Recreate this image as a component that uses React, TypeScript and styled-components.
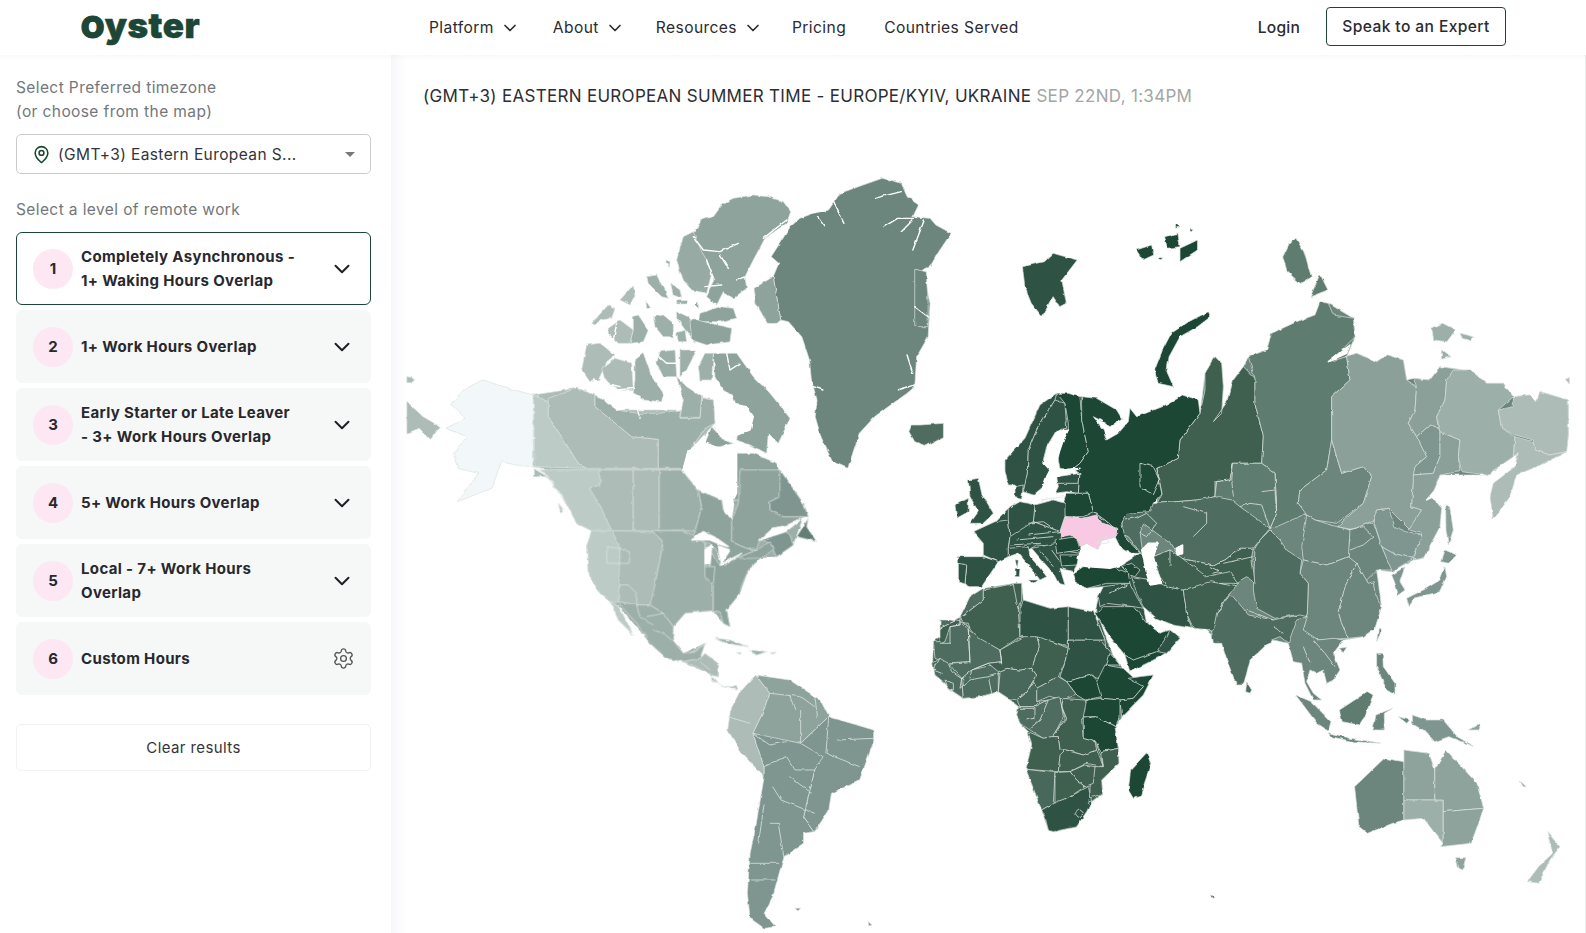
import React from 'react';
import styled, { createGlobalStyle } from 'styled-components';
import { ChevronDown, MapPin, Settings } from 'lucide-react';

const GlobalStyle = createGlobalStyle`
  html, body {
    margin: 0;
    height: 100%;
    background: #ffffff;
    overflow: hidden;
  }
  * {
    box-sizing: border-box;
  }
`;

const FONT = `'Inter', 'Open Sans', sans-serif`;

const Page = styled.div`
  display: flex;
  flex-direction: column;
  width: 1586px;
  height: 933px;
  font-family: ${FONT};
  color: #28282d;
`;

const TopBar = styled.header`
  position: relative;
  z-index: 2;
  display: flex;
  align-items: center;
  flex: 0 0 55px;
  padding: 0 80px 0 81px;
  background: #ffffff;
  box-shadow: 0 1px 5px rgba(20, 30, 40, 0.05);
`;

const Logo = styled.div`
  width: 348px;
  margin-top: -6px;
  font-size: 35px;
  font-weight: 900;
  letter-spacing: 0.5px;
  color: #1c4635;
  -webkit-text-stroke: 0.5px #1c4635;
`;

const LogoCap = styled.span`
  font-size: 30px;
  -webkit-text-stroke: 1.2px #1c4635;
`;

const Nav = styled.nav`
  display: flex;
  align-items: center;
  flex: 1;
`;

const NavLink = styled.a<{ $gap: number }>`
  display: flex;
  align-items: center;
  gap: 6px;
  margin-right: ${(p) => p.$gap}px;
  font-size: 15.6px;
  letter-spacing: 0.4px;
  color: #2b2b30;
`;

const Login = styled.a`
  margin-right: 26px;
  font-size: 15.6px;
  font-weight: 500;
  letter-spacing: 0.2px;
  color: #2b2b30;
`;

const ExpertButton = styled.button`
  width: 180px;
  height: 39px;
  margin-top: -2px;
  padding: 0;
  font-family: ${FONT};
  font-size: 15.6px;
  font-weight: 500;
  letter-spacing: 0.4px;
  color: #2b2b30;
  background: #ffffff;
  border: 1px solid #1c4635;
  border-radius: 4px;
`;

const Body = styled.div`
  display: grid;
  grid-template-columns: 391px 1fr;
  flex: 1;
  min-height: 0;
`;

const Sidebar = styled.aside`
  display: flex;
  flex-direction: column;
  padding: 21px 20px 0 16px;
  background: #ffffff;
`;

const Label = styled.div`
  font-size: 15.5px;
  line-height: 24px;
  letter-spacing: 0.4px;
  color: #73777c;
`;

const Select = styled.div`
  display: flex;
  align-items: center;
  height: 40px;
  margin: 10px 0 24px;
  padding: 0 16px 0 15px;
  gap: 7px;
  font-size: 15.5px;
  letter-spacing: 0.4px;
  color: #34343a;
  background: #ffffff;
  border: 1px solid #c9cccd;
  border-radius: 5px;

  svg {
    color: #1c4635;
  }
`;

const SelectValue = styled.span`
  flex: 1;
`;

const Caret = styled.span`
  width: 0;
  height: 0;
  margin-right: -1px;
  border-left: 5px solid transparent;
  border-right: 5px solid transparent;
  border-top: 5px solid #77797c;
`;

const CardList = styled.div`
  display: flex;
  flex-direction: column;
  gap: 5px;
  margin-top: 10px;
`;

const Card = styled.div<{ $active?: boolean }>`
  display: flex;
  align-items: center;
  height: 73px;
  padding: 0 15px 0 16px;
  background: ${(p) => (p.$active ? '#ffffff' : '#f6f7f7')};
  border: 1px solid ${(p) => (p.$active ? '#1c4635' : '#f6f7f7')};
  border-radius: 6px;
`;

const Badge = styled.div`
  display: flex;
  align-items: center;
  justify-content: center;
  flex: 0 0 40px;
  height: 40px;
  margin-right: 8px;
  font-size: 15px;
  font-weight: 700;
  color: #28282d;
  background: #fce7f3;
  border-radius: 50%;
`;

const CardTitle = styled.div`
  flex: 1;
  font-size: 15px;
  font-weight: 700;
  line-height: 24px;
  letter-spacing: 0.35px;
  color: #28282d;
`;

const ClearButton = styled.button`
  width: 100%;
  height: 47px;
  margin-top: 29px;
  font-family: ${FONT};
  font-size: 15px;
  letter-spacing: 0.4px;
  color: #34343a;
  background: #ffffff;
  border: 1px solid #f1f2f3;
  border-radius: 5px;
`;

const Main = styled.main`
  overflow: hidden;
  border-right: 1px solid #ebecec;
  background: linear-gradient(90deg, #f5f6f9 0, #fcfcfd 8px, #ffffff 16px);
`;

const ZoneTitle = styled.div`
  height: 53px;
  padding: 29px 0 0 32px;
  font-size: 17px;
  line-height: 24px;
  letter-spacing: 0.3px;
  text-transform: uppercase;
  color: #2d2d33;
  white-space: nowrap;
`;

const ZoneTime = styled.span`
  color: #a5a5a5;
`;

const MapSvg = styled.svg`
  display: block;
  margin-top: 12px;
  width: 1195px;
  height: 813px;
`;

const Land = styled.path`
  stroke: #dbe3e0;
  stroke-width: 0.7;
  vector-effect: non-scaling-stroke;
  stroke-linejoin: round;
`;

const Line = styled.path`
  fill: none;
  stroke: #dbe3e0;
  stroke-width: 0.8;
  vector-effect: non-scaling-stroke;
`;

const Sea = styled.path`
  fill: #ffffff;
  stroke: #ffffff;
  stroke-width: 1.4;
  vector-effect: non-scaling-stroke;
  stroke-linejoin: round;
  stroke-linecap: round;
`;

const Fjord = styled(Sea)`
  fill: none;
`;

type Shape = [string, string];

const C = {
  alaska: '#f2f7f9',
  pale: '#bdcbc7',
  light: '#adbcb7',
  mid: '#9dafa9',
  soft: '#8ea39c',
  slate: '#7f9690',
  sage: '#6c857d',
  moss: '#5f7b6f',
  fern: '#4f6c61',
  pine: '#3f6050',
  forest: '#2f5345',
  dark: '#1c4635',
  pink: '#f9c8e3',
};

type RegionData = {
  at: string;
  land: Shape[];
  lines?: string[];
  seas?: string[];
  fjords?: string[];
};

const ARCTIC_AT = 'translate(520 180) scale(0.3333)';
const NORTH_AMERICA_AT = 'translate(540 470) scale(0.3333)';
const AFRICA_AT = 'translate(920 620) scale(0.3333)';
const ASIA_AT = 'translate(1200 300) scale(0.3333)';
const EUROPE_AT = 'translate(940 380) scale(0.3333)';

// solid continent shapes, drawn first so the bands below sit on land
const underlays: RegionData[] = [
  {
    at: ARCTIC_AT,
    land: [[C.light, 'M40,645 170,625 225,645 290,690 480,690 540,650 580,660 585,730 510,810 490,865 490,890 40,890Z']],
  },
  {
    at: NORTH_AMERICA_AT,
    land: [[C.mid, 'M0,0 425,0 475,60 545,90 550,120 575,150 600,0 720,0 790,100 805,140 790,140 760,225 710,260 660,265 625,300 600,370 560,420 570,470 550,460 520,422 435,430 400,470 398,510 430,550 495,520 480,565 535,580 535,620 515,615 430,575 380,565 330,520 235,405 210,395 180,370 145,310 140,230 155,182 110,160 75,90 25,20Z']],
  },
  {
    at: AFRICA_AT,
    land: [[C.pine, 'M40,65 120,0 540,0 575,100 625,175 700,165 670,225 605,290 585,320 595,385 597,430 545,480 548,520 515,545 470,620 400,635 385,630 365,570 340,505 318,448 335,375 325,335 300,310 290,285 295,260 265,235 235,215 180,230 130,235 100,215 70,185 45,165 38,130Z']],
  },
  {
    at: ASIA_AT,
    land: [[C.sage, 'M0,340 15,220 45,170 65,190 70,260 65,340 40,365 85,300 100,240 130,200 145,170 200,150 215,100 345,45 385,10 460,55 465,110 440,170 470,160 530,185 560,165 610,180 620,240 640,235 690,240 720,200 790,210 810,210 860,250 910,250 940,290 990,285 1010,305 1020,275 1105,300 1105,405 1100,455 1010,500 945,500 955,458 940,470 860,525 720,525 695,590 725,625 670,775 640,780 600,800 575,815 530,810 545,920 490,1010 430,1020 400,1015 355,1020 310,990 265,1030 215,1020 150,1080 110,1155 65,1030 0,970 -60,970 -40,880 -170,770 -240,700 -234,670 -129,610 -129,505 -66,475Z']],
  },
  {
    at: EUROPE_AT,
    land: [
      [C.pine, 'M60,715 90,650 130,625 225,610 245,610 250,660 330,685 385,680 460,695 495,780 500,830 0,830 0,745Z'],
      [C.forest, 'M100,455 165,425 205,385 240,365 285,375 340,360 370,370 380,340 415,340 445,340 460,395 495,420 530,450 530,470 490,480 470,510 440,490 420,500 420,525 410,555 400,575 360,565 340,580 275,505 205,505 175,545 130,525 130,490Z'],
      [C.forest, 'M195,240 255,175 300,75 350,40 425,50 445,215 420,250 395,270 360,265 355,240 360,185 385,150 350,150 320,200 310,240 330,270 310,320 280,345 250,335 240,340 225,315 205,315 195,270Z'],
      [C.forest, 'M400,580 430,560 545,555 600,520 640,530 690,510 800,590 895,610 860,650 830,700 820,750 755,745 700,735 650,715 610,680 620,730 660,760 690,750 720,775 680,820 570,875 555,825 510,770 465,700 475,650 490,620 440,625 410,610Z'],
    ],
  },
];

const farNorth: RegionData = {
  at: 'translate(400 160) scale(0.3827 0.3333)',
  land: [
    [C.alaska, 'M348,705 300,690 215,660 165,690 135,735 170,775 120,805 175,830 140,880 150,925 205,940 150,1025 240,985 265,905 300,915 348,920 375,925 415,985 440,1040 415,1000 385,950 348,925Z'],
    [C.light, 'M18,725 60,770 105,800 80,838 50,805 18,820Z'],
    [C.light, 'M18,650 30,652 38,660 30,668 18,668Z'],
    [C.sage, 'M970,290 1020,200 1045,175 1080,160 1120,150 1150,100 1210,75 1260,55 1310,70 1325,110 1355,135 1340,170 1385,175 1400,195 1440,220 1405,280 1385,320 1365,330 1375,380 1385,430 1380,530 1350,590 1345,680 1325,700 1270,745 1240,770 1200,820 1170,925 1130,905 1100,830 1085,770 1090,720 1075,660 1070,600 1050,530 1015,485 995,480 975,350 990,310Z'],
    [C.soft, 'M975,350 995,480 985,490 960,490 930,430 925,385Z'],
    [C.sage, 'M1345,328 1375,335 1380,430 1380,500 1345,500Z'],
    [C.fern, 'M1335,795 1360,795 1420,790 1420,830 1375,858 1345,845 1330,815Z'],
  ],
  fjords: [
    'M1240,115 1310,95',
    'M1265,200 1300,175 1350,175',
    'M1310,215 1340,180',
    'M1340,270 1370,180',
    'M1130,120 1160,190',
    'M1090,170 1110,200',
    'M1300,690 1345,675',
    'M1325,585 1340,640',
    'M1080,680 1105,690',
    'M1345,440 1380,470',
  ],
};

const arctic: RegionData = {
  at: ARCTIC_AT,
  land: [
    [C.soft, 'M610,70 640,55 700,45 745,50 790,65 812,95 800,130 770,150 735,175 700,240 675,290 680,325 640,355 610,335 590,375 560,350 585,300 565,260 540,230 520,160 545,120 580,110Z'],
    ['#97aaa4', 'M490,170 520,155 545,215 560,240 575,280 560,340 515,330 490,300 470,240Z'],
    ['#97aaa4', 'M435,240 450,245 448,262Z'],
    [C.soft, 'M540,400 600,380 640,385 650,415 600,425 535,425Z'],
    [C.light, 'M215,430 265,375 285,385 275,415 240,420 225,435Z'],
    [C.light, 'M300,360 340,315 345,345 330,375Z'],
    [C.light, 'M265,445 300,420 340,450 330,490 295,490 265,460Z'],
    [C.mid, 'M340,410 355,405 385,450 370,485 330,490 340,450Z'],
    [C.mid, 'M380,290 410,285 445,355 425,350 385,310Z'],
    [C.mid, 'M452,310 480,330 485,355 460,345Z'],
    [C.mid, 'M400,410 430,405 460,430 460,470 430,470 405,440Z'],
    [C.mid, 'M470,395 505,410 530,440 525,490 500,455 470,415Z'],
    [C.mid, 'M470,460 495,450 500,485 475,485Z'],
    [C.soft, 'M510,420 530,420 635,445 630,485 560,495 515,480Z'],
    [C.soft, 'M525,375 535,365 535,385Z'],
    [C.mid, 'M470,362 500,362 500,372 470,372Z'],
    [C.mid, 'M378,362 392,385 380,385Z'],
    [C.light, 'M200,495 240,490 285,525 260,545 235,600 210,605 185,570Z'],
    [C.light, 'M245,565 285,535 335,550 340,632 300,630 255,600Z'],
    [C.mid, 'M345,540 370,520 395,590 430,640 425,665 370,660 340,640 345,600Z'],
    [C.mid, 'M420,515 465,510 470,590 430,590 410,550Z'],
    [C.mid, 'M480,510 530,510 500,570 480,590Z'],
    [C.soft, 'M580,520 650,520 700,590 750,640 810,715 775,790 745,760 740,820 700,800 650,780 660,720 640,650 600,620 585,590Z'],
    [C.mid, 'M535,560 555,520 580,520 575,600 540,600Z'],
    [C.pale, 'M40,645 85,665 85,712 125,770 175,850 200,865 45,860Z'],
    [C.light, 'M85,655 170,625 225,645 225,680 335,770 415,778 415,865 200,865 175,850 125,770 85,710Z'],
    [C.mid, 'M225,645 290,690 350,700 420,700 480,690 480,715 540,715 545,655 580,660 585,730 555,745 510,810 490,865 415,865 415,778 335,770 225,680Z'],
    [C.mid, 'M470,590 500,620 545,650 540,712 480,712 490,660Z'],
    [C.soft, 'M555,790 575,740 610,780 640,790 600,800 565,800Z'],
    [C.soft, 'M650,820 700,820 770,850 780,880 800,905 830,960 640,960Z'],
  ],
  seas: [
    'M490,865 505,810 560,790 610,810 650,820 650,880 650,940 640,960 555,940 510,910Z',
    'M620,670 680,680 700,710 690,750 640,770 600,760 610,700Z',
  ],
  fjords: [
    'M520,170 550,210 600,215 655,190',
    'M600,225 625,265',
    'M560,240 580,295',
    'M555,320 605,315',
    'M730,175 800,120',
    'M650,300 680,290',
    'M620,520 630,570 660,550',
    'M290,630 345,625',
    'M220,600 300,620',
    'M290,690 360,670 440,690',
    'M350,680 360,715',
    'M405,520 440,550 470,550',
    'M280,480 290,430',
  ],
};

const northAmerica: RegionData = {
  at: NORTH_AMERICA_AT,
  land: [
    [C.pale, 'M0,0 180,0 180,45 148,55 180,105 215,182 155,182 110,160 75,90 25,20Z'],
    [C.pale, 'M55,100 72,120 62,130Z'],
    [C.light, 'M180,0 280,0 280,182 215,182 180,105 148,55 180,45Z'],
    [C.light, 'M280,0 358,0 358,182 280,182Z'],
    [C.mid, 'M358,0 425,0 475,60 485,110 465,185 425,180 358,182Z'],
    [C.soft, 'M475,60 545,90 550,120 575,150 575,215 620,235 650,240 590,265 545,285 540,255 510,220 460,210 465,185 485,110Z'],
    [C.soft, 'M575,150 595,100 600,0 720,0 750,50 720,80 690,95 690,120 730,140 790,140 725,175 660,210 650,235 620,235 575,215Z'],
    [C.slate, 'M720,0 790,100 805,140 730,140 690,120 690,95 720,80Z'],
    ['#647f75', 'M805,145 800,170 830,215 790,205 770,200Z'],
    [C.slate, 'M660,210 725,175 750,195 760,225 710,260 700,240 690,215Z'],
    [C.pale, 'M155,182 215,182 240,230 240,395 210,395 180,370 145,310 140,230Z'],
    [C.light, 'M215,182 335,185 370,215 345,345 350,345 345,405 290,405 235,395 240,230Z'],
    [C.mid, 'M335,182 425,182 460,195 495,220 495,290 520,340 520,422 480,425 435,430 400,470 370,430 330,405 345,345 370,215Z'],
    [C.soft, 'M495,290 495,220 540,285 590,265 660,240 660,265 625,300 605,345 600,370 560,420 570,470 550,460 540,425 520,422 520,340 495,320Z'],
    [C.soft, 'M590,265 650,240 690,215 700,240 660,265Z'],
    [C.pale, 'M210,395 235,405 280,495 235,450Z'],
    [C.mid, 'M235,395 290,405 330,405 370,430 400,470 398,510 430,550 460,545 495,520 480,565 430,575 380,565 330,520 290,460 245,410Z'],
    [C.light, 'M430,575 480,565 495,550 535,580 535,620 515,615 470,590Z'],
    [C.light, 'M515,620 545,650 590,650 595,660 550,650 515,630Z'],
    [C.mid, 'M525,505 570,510 625,530 590,525 545,515Z'],
    [C.mid, 'M625,540 680,545 650,555Z'],
    [C.mid, 'M590,548 605,548 600,552Z'],
    [C.mid, 'M690,548 708,548 700,552Z'],
  ],
  lines: [
    'M200,230 235,235 268,245 268,280 200,280Z',
    'M235,345 265,345 290,370 290,405',
    'M290,405 300,440 340,465',
    'M320,440 370,430',
    'M340,480 370,490 395,510',
    'M495,290 525,290 520,340',
    'M450,550 500,520',
    'M480,575 510,600',
  ],
  seas: [
    'M455,210 490,185 530,205 565,230 545,225 510,210Z',
    'M495,240 515,225 510,285 495,280Z',
    'M535,228 570,240 545,280 540,260Z',
    'M540,285 605,250 580,265 550,285Z',
    'M660,210 700,175 745,165 780,150 735,185Z',
  ],
};

const southAndOceania: RegionData = {
  at: 'translate(680 560) scale(0.5612 0.3333)',
  land: [
    [C.light, 'M135,345 160,400 150,450 130,520 150,620 150,650 110,580 85,510 90,450 105,400Z'],
    [C.soft, 'M135,345 195,360 250,420 265,470 215,550 180,540 150,530 130,520 150,450 160,400Z'],
    [C.slate, 'M265,470 345,510 345,545 320,660 270,700 265,750 240,815 220,770 240,630 250,590 215,550Z'],
    [C.slate, 'M130,520 215,550 255,590 240,630 220,770 240,815 220,820 220,850 185,890 175,950 165,1010 150,1060 170,1100 150,1105 125,1075 120,1000 125,880 135,800 150,650 150,620Z'],
    [C.sage, 'M1255,595 1290,605 1290,780 1270,790 1225,820 1210,800 1202,680Z'],
    [C.soft, 'M1290,605 1290,570 1335,580 1345,630 1345,720 1290,720Z'],
    [C.mid, 'M1290,720 1360,720 1360,850 1345,820 1325,775 1290,780Z'],
    [C.soft, 'M1345,630 1365,570 1420,670 1432,745 1360,755 1360,720 1345,720Z'],
    [C.soft, 'M1360,755 1432,745 1410,850 1355,860 1360,850Z'],
    [C.soft, 'M1382,893 1400,893 1395,930 1388,925Z'],
    [C.light, 'M1545,815 1568,860 1550,900 1530,970 1510,965 1530,920 1555,880Z'],
    [C.slate, 'M1305,465 1330,480 1360,480 1385,530 1415,560 1370,530 1345,545 1325,510 1305,490Z'],
    [C.sage, 'M1097,405 1125,425 1160,485 1155,512 1135,490Z'],
    [C.sage, 'M1155,518 1195,535 1250,550 1200,545 1160,530Z'],
    [C.moss, 'M1175,450 1225,395 1235,405 1220,470 1210,495 1180,485Z'],
    [C.sage, 'M1240,465 1270,445 1255,460 1255,510 1235,510Z'],
    [C.sage, 'M1280,470 1300,480 1295,490Z'],
    [C.soft, 'M1405,510 1425,490 1425,510Z'],
    [C.soft, 'M1495,660 1508,680 1503,680Z'],
    [C.dark, 'M945,1005 952,1010 948,1015Z'],
    [C.sage, 'M205,1045 215,1045 210,1052Z'],
    [C.sage, 'M335,1085 342,1095 337,1097Z'],
  ],
  lines: [
    'M130,520 160,555 190,545',
    'M215,450 215,550',
    'M160,400 215,410 240,440',
    'M265,470 260,580 290,600 320,620',
    'M150,620 190,590 205,630 240,630',
    'M195,650 235,700',
    'M165,680 180,720 240,760',
    'M150,730 140,850',
    'M160,790 175,790 185,890',
    'M125,910 175,910',
    'M125,960 170,960',
    'M195,405 205,450',
    'M240,410 245,470',
    'M85,470 125,490',
    'M280,540 345,535',
  ],
};

const africa: RegionData = {
  at: AFRICA_AT,
  land: [
    [C.fern, 'M40,65 75,65 90,20 120,15 120,0 145,30 150,125 90,128 85,130 45,115Z'],
    [C.fern, 'M145,30 240,90 245,125 205,130 155,150 125,175 90,155 85,130 150,125Z'],
    [C.fern, 'M38,130 60,115 85,130 125,175 130,235 100,215 70,185 45,165Z'],
    [C.fern, 'M125,175 155,150 240,130 235,215 180,230 130,235Z'],
    ['#46675a', 'M235,155 260,145 300,150 335,145 350,165 320,215 290,240 265,235 235,215Z'],
    [C.pine, 'M240,90 320,45 350,45 358,80 335,145 300,150 260,145 235,155 205,130 245,125Z'],
    [C.pine, 'M350,45 445,85 435,125 415,170 350,205 340,185 350,165 335,145 358,80Z'],
    [C.forest, 'M445,60 540,60 575,100 560,135 540,175 515,165 440,185 420,170 435,125 445,85Z'],
    [C.dark, 'M440,185 515,165 535,185 545,230 495,240 470,225Z'],
    ['#46675a', 'M350,205 415,170 440,185 470,225 425,240 390,228 350,245Z'],
    ['#46675a', 'M290,240 320,215 340,185 350,205 350,245 385,240 345,260 300,260Z'],
    [C.fern, 'M295,260 345,260 385,240 420,230 430,290 400,350 370,355 330,330 300,310 290,285Z'],
    [C.pine, 'M420,235 495,240 505,265 485,300 490,355 525,365 530,390 490,405 440,390 420,390 415,350 395,350 435,295Z'],
    [C.dark, 'M555,135 610,145 670,200 640,235 600,240 545,235 530,185Z'],
    [C.dark, 'M625,175 700,165 670,225 605,290 600,240 640,235 670,200Z'],
    [C.dark, 'M570,100 600,135 560,135Z'],
    [C.dark, 'M500,240 545,235 600,240 600,290 585,320 530,290 490,290Z'],
    [C.dark, 'M490,295 530,290 585,320 595,385 545,395 525,365 490,355Z'],
    [C.pine, 'M325,335 370,355 395,350 415,350 420,390 435,390 420,410 415,455 318,448 335,375Z'],
    [C.pine, 'M420,405 435,390 490,405 530,390 550,440 500,430 450,455 415,455Z'],
    [C.pine, 'M545,395 595,385 597,430 545,480 548,520 510,535 510,500 525,440 550,440Z'],
    [C.pine, 'M450,455 495,435 525,440 520,490 495,500 470,480Z'],
    ['#46675a', 'M318,448 405,458 400,550 365,570 340,505Z'],
    [C.pine, 'M405,458 450,455 470,480 495,500 450,530 405,550Z'],
    [C.forest, 'M365,570 400,550 450,530 505,500 515,545 500,575 470,620 400,635 385,630 375,590Z'],
    [C.dark, 'M680,398 692,430 680,470 660,530 640,535 625,510 632,450Z'],
  ],
  lines: [
    'M478,568 490,578 475,592 465,580Z',
    'M505,540 518,545 510,555 502,550Z',
    'M60,115 40,150 65,160',
    'M75,180 100,190 100,210 85,205Z',
    'M175,175 205,170 215,220',
    'M205,170 240,160 235,215',
    'M125,175 120,205 150,180 175,175',
    'M300,265 345,265 345,295 320,300',
    'M385,240 360,300 330,325',
    'M430,235 425,260 440,295 400,345',
    'M530,375 540,400 550,440',
    'M205,130 155,150 150,175',
    'M85,130 95,155 130,180',
  ],
};

const asia: RegionData = {
  at: ASIA_AT,
  land: [
    [C.pine, 'M0,340 15,270 15,220 45,170 65,190 70,260 65,340 40,365 85,300 100,240 130,200 165,235 165,310 190,410 185,490 100,490 90,540 45,545 45,590 5,600 -10,600 -129,610 -114,580 -129,505 -66,475 -60,420Z'],
    [C.moss, 'M145,170 200,150 215,100 290,65 345,45 360,5 385,10 400,45 460,55 465,110 390,185 440,170 450,240 395,290 395,420 380,510 300,570 295,610 320,640 230,680 210,685 230,640 225,520 185,490 190,410 165,310 165,235Z'],
    [C.sage, 'M395,420 425,520 490,500 515,530 490,610 410,670 345,660 320,645 295,610 300,570 380,510Z'],
    ['#8ca09a', 'M435,170 470,160 530,185 560,165 610,180 620,240 650,260 645,330 625,370 650,410 680,470 645,500 640,550 635,620 665,630 630,690 600,660 565,625 530,630 520,660 465,690 410,680 490,610 515,530 490,500 425,520 395,420 395,290 450,240 440,170Z'],
    ['#8ca09a', 'M640,235 690,240 720,200 790,210 740,240 735,300 710,350 715,385 690,375 650,410 625,370 645,330 650,260Z'],
    [C.slate, 'M650,410 690,375 715,385 720,395 720,470 700,520 640,525 645,500 680,470Z'],
    ['#8ca09a', 'M720,395 780,420 775,470 780,515 720,525 695,590 725,625 720,680 670,775 640,780 655,730 665,700 625,690 665,630 635,620 640,550 640,525 700,520 720,470Z'],
    [C.mid, 'M760,210 810,210 860,250 910,250 940,290 895,330 905,385 945,410 940,470 860,525 820,520 785,515 775,470 780,420 720,395 710,350 735,300 740,240Z'],
    [C.light, 'M940,290 990,285 1010,305 1020,275 1105,300 1105,405 1100,455 1050,465 1000,450 1000,420 945,405 905,385 895,330 940,320Z'],
    [C.light, 'M945,410 1000,425 1005,450 1050,465 1100,455 1010,500 950,525 930,590 880,660 870,590 880,550 945,500 955,458 940,470Z'],
    ['#8ca09a', 'M737,615 750,625 760,690 745,735 738,690Z'],
    [C.slate, 'M735,750 770,765 745,790 725,785Z'],
    [C.slate, 'M620,895 680,865 720,840 735,800 740,830 720,875 640,895 628,920Z'],
    [C.slate, 'M575,825 615,800 600,845 615,870 595,885 585,850Z'],
    [C.slate, 'M520,660 530,630 565,625 585,680 630,700 665,705 640,775 600,800 575,815 545,740Z'],
    [C.sage, 'M445,690 465,685 520,665 545,740 575,810 530,810 500,840 505,855 470,790 440,770 450,720Z'],
    [C.sage, 'M320,645 345,660 410,680 450,690 445,770 380,795 310,780 305,740 315,680Z'],
    [C.sage, 'M310,780 380,795 445,770 470,790 435,860 425,900 415,935 425,970 445,1015 360,1020 320,1010 310,990 322,940 325,850 300,820Z'],
    [C.sage, 'M470,790 505,850 520,845 525,880 545,920 525,985 490,1010 445,1015 425,970 415,935 425,900 435,860Z'],
    [C.fern, 'M210,690 240,720 260,750 305,780 300,820 325,850 322,940 315,955 285,945 225,955 170,925 160,870 165,745 180,720Z'],
    [C.fern, 'M-234,670 -225,620 -129,610 -10,600 45,590 50,545 90,540 100,490 185,490 225,520 230,640 210,685 180,720 160,745 120,745 75,780 40,795 -60,775 -90,730 -130,700 -170,670 -180,700 -170,770 -215,710 -240,700Z'],
    [C.moss, 'M45,590 50,545 90,540 100,490 185,490 225,520 230,640 210,685 120,620 95,600Z'],
    [C.pine, 'M-60,775 40,795 75,780 120,745 160,745 155,770 165,850 140,830 90,860 60,850 0,845 -40,880Z'],
    [C.pine, 'M-40,880 0,845 60,850 90,860 60,920 30,930 40,990 0,970 -60,970 -40,920Z'],
    [C.fern, 'M30,960 60,930 90,880 125,920 145,945 220,960 300,945 320,950 290,1000 265,1030 240,1010 215,1020 150,1080 140,1120 130,1155 110,1155 80,1080 65,1030 40,1030Z'],
    [C.fern, 'M140,1145 155,1170 150,1180 137,1175Z'],
    [C.sage, 'M290,960 322,950 310,990 355,1020 400,1015 430,1020 400,1060 420,1110 400,1140 380,1150 370,1110 350,1120 330,1110 320,1145 340,1180 365,1200 340,1200 315,1150 305,1090 280,1085 265,1030Z'],
    [C.sage, 'M418,1045 440,1042 430,1058Z'],
    [C.sage, 'M535,988 545,990 530,1025Z'],
    [C.sage, 'M530,1060 548,1060 550,1100 585,1150 585,1185 560,1170 530,1100Z'],
  ],
  lines: [
    'M100,490 95,540 100,590',
    'M185,575 225,570 230,640',
    'M120,620 150,610 185,615 210,685',
    'M70,790 160,770',
    'M140,930 220,960',
    'M220,980 250,1000',
    'M30,800 60,815 40,820',
    'M310,1040 330,1090',
    'M340,1020 375,1060 405,1100',
    'M445,690 490,680 520,710 490,735 450,750',
    'M545,740 580,760 640,775',
  ],
  seas: [
    'M385,185 430,150 450,135 440,160Z',
    'M680,600 740,530 700,590Z',
  ],
};

const europe: RegionData = {
  at: EUROPE_AT,
  land: [
    [C.fern, 'M60,710 90,650 130,625 130,660 60,715Z'],
    [C.pine, 'M60,715 130,660 130,630 225,610 235,690 240,770 180,810 110,770Z'],
    [C.fern, 'M0,745 60,715 90,745 85,730 30,720 0,720Z'],
    [C.pine, 'M220,610 245,610 245,660 235,690 225,640Z'],
    [C.forest, 'M240,690 250,660 330,685 385,680 385,800 290,770 240,770Z'],
    [C.forest, 'M385,680 460,695 495,780 385,780Z'],
    [C.forest, 'M195,240 255,175 300,75 350,40 345,60 290,150 265,210 262,280 255,320 240,340 225,315 205,315 195,270Z'],
    [C.forest, 'M345,60 375,70 380,145 350,150 320,200 310,240 330,270 310,320 280,345 250,335 262,280 265,210 290,150Z'],
    [C.dark, 'M350,40 385,40 420,50 425,120 445,215 420,250 395,270 360,265 355,240 360,185 385,150 385,130 375,70Z'],
    [C.forest, 'M350,290 420,280 415,340 380,335 345,340 355,320Z'],
    [C.dark, 'M425,50 470,55 530,90 545,115 510,140 480,120 460,110 490,150 500,180 535,160 565,125 570,85 590,110 680,75 730,45 775,60 780,100 720,180 715,235 650,265 665,340 640,370 630,395 560,400 545,430 555,470 600,520 575,520 540,500 525,470 530,450 495,420 460,395 445,340 415,340 420,280 395,270 420,250 445,215 425,120Z'],
    [C.dark, 'M380,340 415,340 445,340 460,395 430,410 375,410 370,370Z'],
    [C.forest, 'M285,375 340,360 375,370 375,410 360,455 280,425Z'],
    [C.forest, 'M205,385 240,365 285,375 280,425 270,460 210,470 205,420Z'],
    [C.forest, 'M225,320 250,315 245,355 225,350Z'],
    [C.forest, 'M100,455 165,425 205,420 210,470 205,500 205,530 175,545 130,525 130,490Z'],
    [C.forest, 'M85,300 115,295 125,340 160,400 130,430 90,430 115,395 90,350Z'],
    [C.forest, 'M45,375 85,355 85,395 50,415Z'],
    [C.forest, 'M55,530 130,530 175,545 145,590 125,620 85,620 75,610 80,560 55,550Z'],
    [C.forest, 'M55,550 80,555 75,612 55,605Z'],
    [C.forest, 'M210,470 280,425 360,455 365,475 350,500 290,495 265,510 205,505Z'],
    [C.forest, 'M205,505 265,500 270,530 305,570 320,590 300,600 270,560 235,520 205,530Z'],
    [C.forest, 'M265,600 295,600 280,612Z'],
    [C.forest, 'M225,565 240,565 238,590 225,590Z'],
    [C.forest, 'M225,540 235,540 232,560Z'],
    [C.forest, 'M275,505 350,490 360,510 420,520 410,555 400,575 360,565 375,615 355,610 340,580Z'],
    [C.dark, 'M345,480 410,470 420,510 350,520Z'],
    [C.dark, 'M360,525 420,525 410,555 365,558Z'],
    [C.pink, 'M360,455 375,410 425,415 470,405 490,430 530,445 530,470 490,480 470,510 480,520 465,515 440,490 420,500 415,480 390,465 365,470Z'],
    [C.dark, 'M400,580 430,560 520,560 565,580 570,610 500,610 440,625 410,610Z'],
    [C.dark, 'M545,560 575,550 600,570 585,590 570,585Z'],
    [C.forest, 'M490,620 570,610 590,650 610,685 580,680 500,670 480,680 475,650Z'],
    [C.dark, 'M490,680 580,680 620,730 660,760 690,750 720,775 680,820 660,830 570,875 555,825 510,770 465,700Z'],
    [C.forest, 'M690,750 720,775 680,820 650,815 680,770Z'],
    [C.forest, 'M575,590 640,600 680,620 730,630 740,700 755,745 700,735 650,715 610,680 590,640Z'],
    [C.pine, 'M640,530 665,520 690,510 720,530 800,590 870,575 895,610 810,610 730,630 680,620 660,590Z'],
    [C.pine, 'M730,630 810,605 890,620 860,650 830,700 820,750 760,745 740,700Z'],
  ],
  lines: [
    'M265,430 310,425 340,445',
    'M265,465 360,455',
    'M230,480 340,470',
    'M210,495 300,490',
    'M300,515 340,560',
    'M335,510 360,545',
    'M300,360 375,350',
    'M350,310 415,310',
    'M590,415 620,400 650,430 620,470 600,460',
    'M555,420 595,410',
    'M690,510 690,555',
    'M730,380 800,400 800,430 760,470',
    'M600,250 640,260 660,300 640,345 600,320Z',
    'M510,640 560,615',
    'M555,825 580,840 650,815',
    'M60,715 60,735 30,740 30,790 0,790',
    'M85,745 90,850',
    'M180,810 185,850',
    'M465,485 500,470 510,490 480,490Z',
  ],
  seas: [
    'M415,530 440,495 480,515 510,530 545,555 510,565 440,560 415,550Z',
    'M605,510 625,490 655,490 640,530 650,570 665,610 630,615 620,580Z',
    'M708,505 728,495 728,520 712,525Z',
    'M312,250 330,200 385,150 370,180 350,240 355,270 420,265 395,275 350,290 320,330 300,345 320,290 330,270Z',
  ],
};

const polar: RegionData = {
  at: 'translate(900 200) scale(0.4375 0.3333)',
  land: [
    [C.forest, 'M280,200 330,185 350,160 405,180 370,240 380,310 365,320 350,290 325,350 300,310 285,260Z'],
    [C.dark, 'M540,150 575,135 580,165 555,180Z'],
    [C.dark, 'M605,110 635,100 640,140 610,145Z'],
    [C.dark, 'M640,145 680,120 680,150 640,185Z'],
    [C.dark, 'M590,170 600,170 595,180Z'],
    [C.dark, 'M630,72 640,80 630,85Z'],
    [C.dark, 'M660,85 670,90 665,95Z'],
    [C.dark, 'M705,335 710,350 680,380 640,410 615,470 610,515 625,560 590,550 582,510 600,450 620,400 660,365Z'],
    [C.moss, 'M905,115 925,160 940,230 915,250 885,215 875,170 890,130Z'],
    [C.moss, 'M960,222 978,270 938,290Z'],
    [C.mid, 'M1215,385 1240,370 1270,390 1250,425 1220,420Z'],
    [C.mid, 'M1280,400 1312,410 1305,422 1285,415Z'],
    [C.mid, 'M1240,450 1260,470 1240,478Z'],
    [C.light, 'M1522,540 1530,532 1530,552Z'],
  ],
};

const REGIONS = [...underlays, farNorth, arctic, northAmerica, southAndOceania, africa, asia, polar, europe];

const MapRegion = ({ region }: { region: RegionData }) => (
  <g transform={region.at}>
    {region.land.map(([fill, d]) => (
      <Land key={d} fill={fill} d={d} />
    ))}
    {region.lines?.map((d) => <Line key={d} d={d} />)}
    {region.seas?.map((d) => <Sea key={d} d={d} />)}
    {region.fjords?.map((d) => <Fjord key={d} d={d} />)}
  </g>
);

const MapView = () => (
  <MapSvg viewBox="391 120 1195 813">
    <defs>
      <filter id="coast" x="-2%" y="-2%" width="104%" height="104%">
        <feTurbulence type="fractalNoise" baseFrequency="0.13" numOctaves="2" seed="4" />
        <feDisplacementMap in="SourceGraphic" scale="3" xChannelSelector="R" yChannelSelector="G" />
      </filter>
    </defs>
    <g filter="url(#coast)">
      {REGIONS.map((region, i) => (
        <MapRegion key={i} region={region} />
      ))}
    </g>
  </MapSvg>
);

const LEVELS: { title: React.ReactNode; gear?: boolean }[] = [
  { title: <>Completely Asynchronous -<br />1+ Waking Hours Overlap</> },
  { title: '1+ Work Hours Overlap' },
  { title: <>Early Starter or Late Leaver<br />- 3+ Work Hours Overlap</> },
  { title: '5+ Work Hours Overlap' },
  { title: <>Local - 7+ Work Hours<br />Overlap</> },
  { title: 'Custom Hours', gear: true },
];

export default function App() {
  return (
    <Page>
      <GlobalStyle />
      <TopBar>
        <Logo><LogoCap>O</LogoCap>yster</Logo>
        <Nav>
          <NavLink $gap={33}>Platform <ChevronDown size={20} strokeWidth={2} /></NavLink>
          <NavLink $gap={31}>About <ChevronDown size={20} strokeWidth={2} /></NavLink>
          <NavLink $gap={29}>Resources <ChevronDown size={20} strokeWidth={2} /></NavLink>
          <NavLink $gap={38}>Pricing</NavLink>
          <NavLink $gap={0}>Countries Served</NavLink>
        </Nav>
        <Login>Login</Login>
        <ExpertButton>Speak to an Expert</ExpertButton>
      </TopBar>
      <Body>
        <Sidebar>
          <Label>Select Preferred timezone<br />(or choose from the map)</Label>
          <Select>
            <MapPin size={19} strokeWidth={2} />
            <SelectValue>(GMT+3) Eastern European S...</SelectValue>
            <Caret />
          </Select>
          <Label>Select a level of remote work</Label>
          <CardList>
            {LEVELS.map((level, i) => (
              <Card key={i} $active={i === 0}>
                <Badge>{i + 1}</Badge>
                <CardTitle>{level.title}</CardTitle>
                {level.gear ? (
                  <Settings size={23} strokeWidth={1.4} color="#555" />
                ) : (
                  <ChevronDown size={26} strokeWidth={1.8} color="#1f1f24" />
                )}
              </Card>
            ))}
          </CardList>
          <ClearButton>Clear results</ClearButton>
        </Sidebar>
        <Main>
          <ZoneTitle>
            (GMT+3) Eastern European Summer Time - Europe/Kyiv, Ukraine <ZoneTime>Sep 22nd, 1:34pm</ZoneTime>
          </ZoneTitle>
          <MapView />
        </Main>
      </Body>
    </Page>
  );
}
